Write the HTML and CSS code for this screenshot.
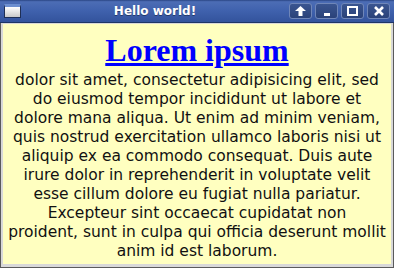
FILE: index.html
```html
<!DOCTYPE html>
<html lang="en">

<head>
    <meta charset="UTF-8">
    <title>Hello world!</title>
    <link rel="stylesheet" href="styles.css">
</head>

<body>

    <div class="window">
        <div class="titlebar">
            <div class="app-icon"></div>
            <div class="title">Hello world!</div>
            <div class="buttons">
                <div class="btn">
                    <svg width="11" height="10" viewBox="0 0 11 10"><path d="M5.5 0 L11 5 L7.5 5 L7.5 10 L3.5 10 L3.5 5 L0 5 Z" fill="#fff"/></svg>
                </div>
                <div class="btn">
                    <svg width="10" height="10" viewBox="0 0 10 10"><rect x="2" y="7" width="6" height="3" fill="#fff"/></svg>
                </div>
                <div class="btn">
                    <svg width="11" height="10" viewBox="0 0 11 10"><rect x="1" y="1" width="9" height="8" fill="none" stroke="#fff" stroke-width="2"/></svg>
                </div>
                <div class="btn">
                    <svg width="10" height="10" viewBox="0 0 10 10"><path d="M1 1 L9 9 M9 1 L1 9" stroke="#fff" stroke-width="2.6"/></svg>
                </div>
            </div>
        </div>

        <div class="content">
            <h1><a href="#">Lorem ipsum</a></h1>
            <p>dolor sit amet, consectetur adipisicing elit, sed do eiusmod tempor incididunt ut labore et dolore mana aliqua. Ut enim ad minim veniam, quis nostrud exercitation ullamco laboris nisi ut aliquip ex ea commodo consequat. Duis aute irure dolor in reprehenderit in voluptate velit esse cillum dolore eu fugiat nulla pariatur. Excepteur sint occaecat cupidatat non<br>proident, sunt in culpa qui officia deserunt mollit anim id est laborum.</p>
        </div>
    </div>

</body>

</html>
```

FILE: styles.css
```css
body {
    margin: 0;
    padding: 0;
    font-family: "DejaVu Sans", sans-serif;
    background-color: #d6d6d6;
}

.window {
    width: 394px;
    height: 268px;
    box-sizing: border-box;
    display: flex;
    flex-direction: column;
    border: 1px solid #5a5a5a;
    border-top: none;
    background-color: #d8d8d8;
}

.titlebar {
    height: 22px;
    flex-shrink: 0;
    display: flex;
    align-items: center;
    background: linear-gradient(#2a4584, #4c6db5 8%, #3f61ad 50%, #33539c);
    border-bottom: 1px solid #1e3566;
    padding: 0 4px 0 4px;
    margin: 0 -1px;
}

.app-icon {
    width: 17px;
    height: 14px;
    box-sizing: border-box;
    border: 1px solid #1f2f55;
    border-top: 3px solid #6d8fd0;
    background: linear-gradient(#ffffff, #c9c9c9);
}

.title {
    flex: 1;
    text-align: center;
    color: #fff;
    font-weight: bold;
    font-size: 12px;
    text-shadow: 0 1px 0 #23396b;
}

.buttons {
    display: flex;
    gap: 3px;
}

.btn {
    width: 23px;
    height: 16px;
    box-sizing: border-box;
    border: 1px solid #6f86b8;
    border-radius: 3px;
    background: linear-gradient(#3a5590, #2a4279);
    display: flex;
    align-items: center;
    justify-content: center;
}

.content {
    flex: 1;
    margin: 1px 2px 3px 2px;
    background-color: #ffffc0;
    text-align: center;
    padding: 0 4px;
}

h1 {
    font-family: "Liberation Serif", serif;
    font-size: 32px;
    font-weight: bold;
    margin: 8px 0 2px 0;
    line-height: 37px;
}

h1 a {
    color: #0000ff;
}

p {
    margin: 0;
    font-size: 15.5px;
    line-height: 19px;
    color: #111;
}
```
